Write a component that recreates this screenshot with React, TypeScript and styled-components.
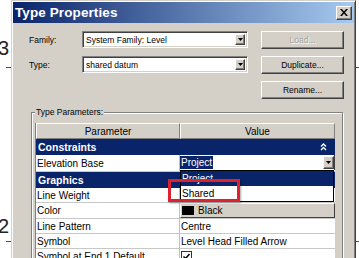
import React from "react";
import styled, { createGlobalStyle } from "styled-components";

const GlobalStyle = createGlobalStyle`
  html, body {
    margin: 0;
    padding: 0;
    background: #fff;
  }
  body {
    font-family: "Liberation Sans", Arial, sans-serif;
    color: #000;
  }
`;

const FACE = "#d4d0c8";
const NAVY = "#0a246a";

const Page = styled.div`
  position: relative;
  width: 359px;
  height: 258px;
  overflow: hidden;
  background: #fff;
  padding-left: 11px;
  box-sizing: border-box;
`;

// level markers drawn on the canvas behind the dialog
const LevelLine = styled.div<{ $top: number }>`
  position: absolute;
  left: 6px;
  right: 0;
  top: ${(p) => p.$top}px;
  border-top: 1px solid #4a4a4a;
`;

const LevelNumber = styled.div<{ $top: number }>`
  position: absolute;
  left: -2px;
  top: ${(p) => p.$top}px;
  font-size: 20px;
  line-height: 1;
  color: #222;
`;

const Dialog = styled.div`
  position: relative;
  z-index: 1;
  width: 345px;
  height: 290px;
  box-sizing: border-box;
  background: ${FACE};
  border: 1px solid;
  border-color: ${FACE} #404040 #404040 ${FACE};
  box-shadow: inset 1px 1px #fff, inset -1px -1px #808080;
  padding: 1px;
`;

const TitleBar = styled.div`
  height: 21px;
  display: flex;
  align-items: center;
  padding: 0 2px 0 2px;
  background: linear-gradient(to right, ${NAVY}, #a6caf0);
`;

const Title = styled.div`
  flex: 1;
  color: #fff;
  font-weight: bold;
  font-size: 13.5px;
  letter-spacing: 0.1px;
`;

const CloseButton = styled.div`
  width: 16px;
  height: 14px;
  box-sizing: border-box;
  display: flex;
  align-items: center;
  justify-content: center;
  background: ${FACE};
  border: 1px solid;
  border-color: #fff #404040 #404040 #fff;
  box-shadow: inset -1px -1px #808080;
`;

const Body = styled.div`
  padding: 8px 0 0 16px;
`;

const TopSection = styled.div`
  display: flex;
`;

const Fields = styled.div`
  display: flex;
  flex-direction: column;
  gap: 8px;
`;

const FieldRow = styled.div`
  display: flex;
  align-items: center;
  height: 17px;
`;

const Label = styled.div`
  width: 53px;
  font-size: 8.5px;
`;

const Combo = styled.div`
  width: 166px;
  height: 17px;
  box-sizing: border-box;
  display: flex;
  align-items: center;
  background: #fff;
  border: 1px solid;
  border-color: #808080 #fff #fff #808080;
  box-shadow: inset 1px 1px #404040, inset -1px -1px ${FACE};
  padding: 2px 2px 2px 2px;
`;

const ComboText = styled.span`
  flex: 1;
  font-size: 8.5px;
  padding-left: 1px;
`;

const DropButton = styled.span<{ $w?: number; $h?: number }>`
  width: ${(p) => p.$w ?? 10}px;
  height: ${(p) => p.$h ?? 11}px;
  box-sizing: border-box;
  display: flex;
  align-items: center;
  justify-content: center;
  background: ${FACE};
  border: 1px solid;
  border-color: #fff #404040 #404040 #fff;
  box-shadow: inset -1px -1px #808080;
`;

const Buttons = styled.div`
  display: flex;
  flex-direction: column;
  gap: 7px;
  margin-left: 13px;
`;

const Button = styled.div<{ $disabled?: boolean }>`
  width: 83px;
  height: 18px;
  box-sizing: border-box;
  display: flex;
  align-items: center;
  justify-content: center;
  font-size: 8.5px;
  background: ${FACE};
  border: 1px solid;
  border-color: #fff #404040 #404040 #fff;
  box-shadow: inset -1px -1px #808080;
  color: ${(p) => (p.$disabled ? "#a0a0a0" : "#000")};
  text-shadow: ${(p) => (p.$disabled ? "1px 1px #fff" : "none")};
`;

const GroupBox = styled.fieldset`
  margin: 8px 0 0 2px;
  width: 312px;
  box-sizing: border-box;
  border: 1px solid #808080;
  box-shadow: inset 1px 1px #fff, 1px 1px #fff;
  padding: 6px 0 0 3px;
  min-width: 0;
`;

const Legend = styled.legend`
  font-size: 8.5px;
  line-height: 10px;
  padding: 0 1px;
  background: ${FACE};
`;

const Table = styled.div`
  width: 299px;
  border-left: 1px solid #808080;
  background: #fff;
`;

const HeaderRow = styled.div`
  display: flex;
  height: 16px;
  background: ${FACE};
`;

const HeaderCell = styled.div<{ $w?: number }>`
  ${(p) => (p.$w ? `width: ${p.$w}px;` : "flex: 1;")}
  box-sizing: border-box;
  display: flex;
  align-items: center;
  justify-content: center;
  font-size: 10px;
  border: 1px solid;
  border-color: #fff #808080 #808080 #fff;
`;

const GroupRow = styled.div`
  display: flex;
  align-items: center;
  height: 16px;
  padding: 0 8px 0 2px;
  background: ${NAVY};
  color: #fff;
  font-weight: bold;
  font-size: 10.5px;
`;

const GroupName = styled.span`
  flex: 1;
`;

const PropRow = styled.div<{ $h?: number }>`
  display: flex;
  height: ${(p) => p.$h ?? 15}px;
  box-sizing: border-box;
  border-bottom: 1px solid #c8c8c8;
  font-size: 10px;
`;

const ParamCell = styled.div`
  width: 144px;
  box-sizing: border-box;
  display: flex;
  align-items: center;
  padding-left: 1px;
  border-right: 1px solid #c0c0c0;
  white-space: nowrap;
`;

const ValueCell = styled.div`
  flex: 1;
  display: flex;
  align-items: center;
  padding-left: 1px;
  white-space: nowrap;
  position: relative;
`;

const InlineCombo = styled.div`
  position: absolute;
  left: 0;
  top: 0;
  right: 0;
  height: 15px;
  display: flex;
  align-items: center;
  background: #fff;
  border-right: 1px solid #404040;
`;

const Selected = styled.span`
  background: ${NAVY};
  color: #fff;
  padding: 0 1px;
  line-height: 13px;
`;

const ComboFill = styled.span`
  flex: 1;
`;

const DropList = styled.div`
  position: absolute;
  left: 0;
  right: 0;
  top: 15px;
  z-index: 2;
  background: #fff;
  border: 1px solid #000;
`;

const ListItem = styled.div<{ $active?: boolean }>`
  height: 15px;
  line-height: 15px;
  padding-left: 1px;
  background: ${(p) => (p.$active ? NAVY : "#fff")};
  color: ${(p) => (p.$active ? "#fff" : "#000")};
`;

const Callout = styled.div`
  position: absolute;
  left: -12px;
  top: 24px;
  width: 72px;
  height: 23px;
  box-sizing: border-box;
  border: 3px solid #dc2230;
  box-shadow: 1px 1px 2px rgba(0, 0, 0, 0.35);
  z-index: 3;
`;

const ColorButton = styled.div`
  flex: 1;
  align-self: stretch;
  display: flex;
  align-items: center;
  gap: 4px;
  margin-left: -1px;
  padding-left: 1px;
  background: ${FACE};
  border: 1px solid;
  border-color: #fff #404040 #404040 #fff;
`;

const Swatch = styled.span`
  width: 12px;
  height: 9px;
  background: #000;
`;

const Arrow = () => (
  <svg width="5" height="3" viewBox="0 0 5 3">
    <path d="M0 0H5L2.5 3Z" fill="#000" />
  </svg>
);

const CloseIcon = () => (
  <svg width="8" height="7" viewBox="0 0 8 7">
    <path
      d="M0 0H2L4 2.4L6 0H8L5 3.5L8 7H6L4 4.6L2 7H0L3 3.5Z"
      fill="#000"
    />
  </svg>
);

const Collapse = () => (
  <svg width="7" height="8" viewBox="0 0 7 8">
    <path
      d="M1 3.5L3.5 1L6 3.5M1 7L3.5 4.5L6 7"
      stroke="#fff"
      strokeWidth="1.3"
      fill="none"
    />
  </svg>
);

const CheckBox = () => (
  <svg width="11" height="11" viewBox="0 0 11 11">
    <rect x="0.5" y="0.5" width="10" height="10" fill="#fff" stroke="#333" />
    <path d="M2.5 5.5L4.5 7.5L8.5 3" stroke="#000" strokeWidth="1.5" fill="none" />
  </svg>
);

export default function App() {
  return (
    <Page>
      <GlobalStyle />
      <LevelNumber $top={38}>3</LevelNumber>
      <LevelLine $top={67} />
      <LevelNumber $top={216}>2</LevelNumber>
      <LevelLine $top={241} />

      <Dialog>
        <TitleBar>
          <Title>Type Properties</Title>
          <CloseButton>
            <CloseIcon />
          </CloseButton>
        </TitleBar>

        <Body>
          <TopSection>
            <Fields>
              <FieldRow>
                <Label>Family:</Label>
                <Combo>
                  <ComboText>System Family: Level</ComboText>
                  <DropButton>
                    <Arrow />
                  </DropButton>
                </Combo>
              </FieldRow>
              <FieldRow>
                <Label>Type:</Label>
                <Combo>
                  <ComboText>shared datum</ComboText>
                  <DropButton>
                    <Arrow />
                  </DropButton>
                </Combo>
              </FieldRow>
            </Fields>
            <Buttons>
              <Button $disabled>Load...</Button>
              <Button>Duplicate...</Button>
              <Button>Rename...</Button>
            </Buttons>
          </TopSection>

          <GroupBox>
            <Legend>Type Parameters:</Legend>
            <Table>
              <HeaderRow>
                <HeaderCell $w={144}>Parameter</HeaderCell>
                <HeaderCell>Value</HeaderCell>
              </HeaderRow>

              <GroupRow>
                <GroupName>Constraints</GroupName>
                <Collapse />
              </GroupRow>
              <PropRow $h={17}>
                <ParamCell>Elevation Base</ParamCell>
                <ValueCell>
                  <InlineCombo>
                    <Selected>Project</Selected>
                    <ComboFill />
                    <DropButton $w={11} $h={13}>
                      <Arrow />
                    </DropButton>
                    <DropList>
                      <ListItem $active>Project</ListItem>
                      <ListItem>Shared</ListItem>
                    </DropList>
                    <Callout />
                  </InlineCombo>
                </ValueCell>
              </PropRow>

              <GroupRow>
                <GroupName>Graphics</GroupName>
              </GroupRow>
              <PropRow>
                <ParamCell>Line Weight</ParamCell>
                <ValueCell />
              </PropRow>
              <PropRow $h={16}>
                <ParamCell>Color</ParamCell>
                <ValueCell>
                  <ColorButton>
                    <Swatch />
                    Black
                  </ColorButton>
                </ValueCell>
              </PropRow>
              <PropRow>
                <ParamCell>Line Pattern</ParamCell>
                <ValueCell>Centre</ValueCell>
              </PropRow>
              <PropRow>
                <ParamCell>Symbol</ParamCell>
                <ValueCell>Level Head Filled Arrow</ValueCell>
              </PropRow>
              <PropRow>
                <ParamCell>Symbol at End 1 Default</ParamCell>
                <ValueCell>
                  <CheckBox />
                </ValueCell>
              </PropRow>
            </Table>
          </GroupBox>
        </Body>
      </Dialog>
    </Page>
  );
}
